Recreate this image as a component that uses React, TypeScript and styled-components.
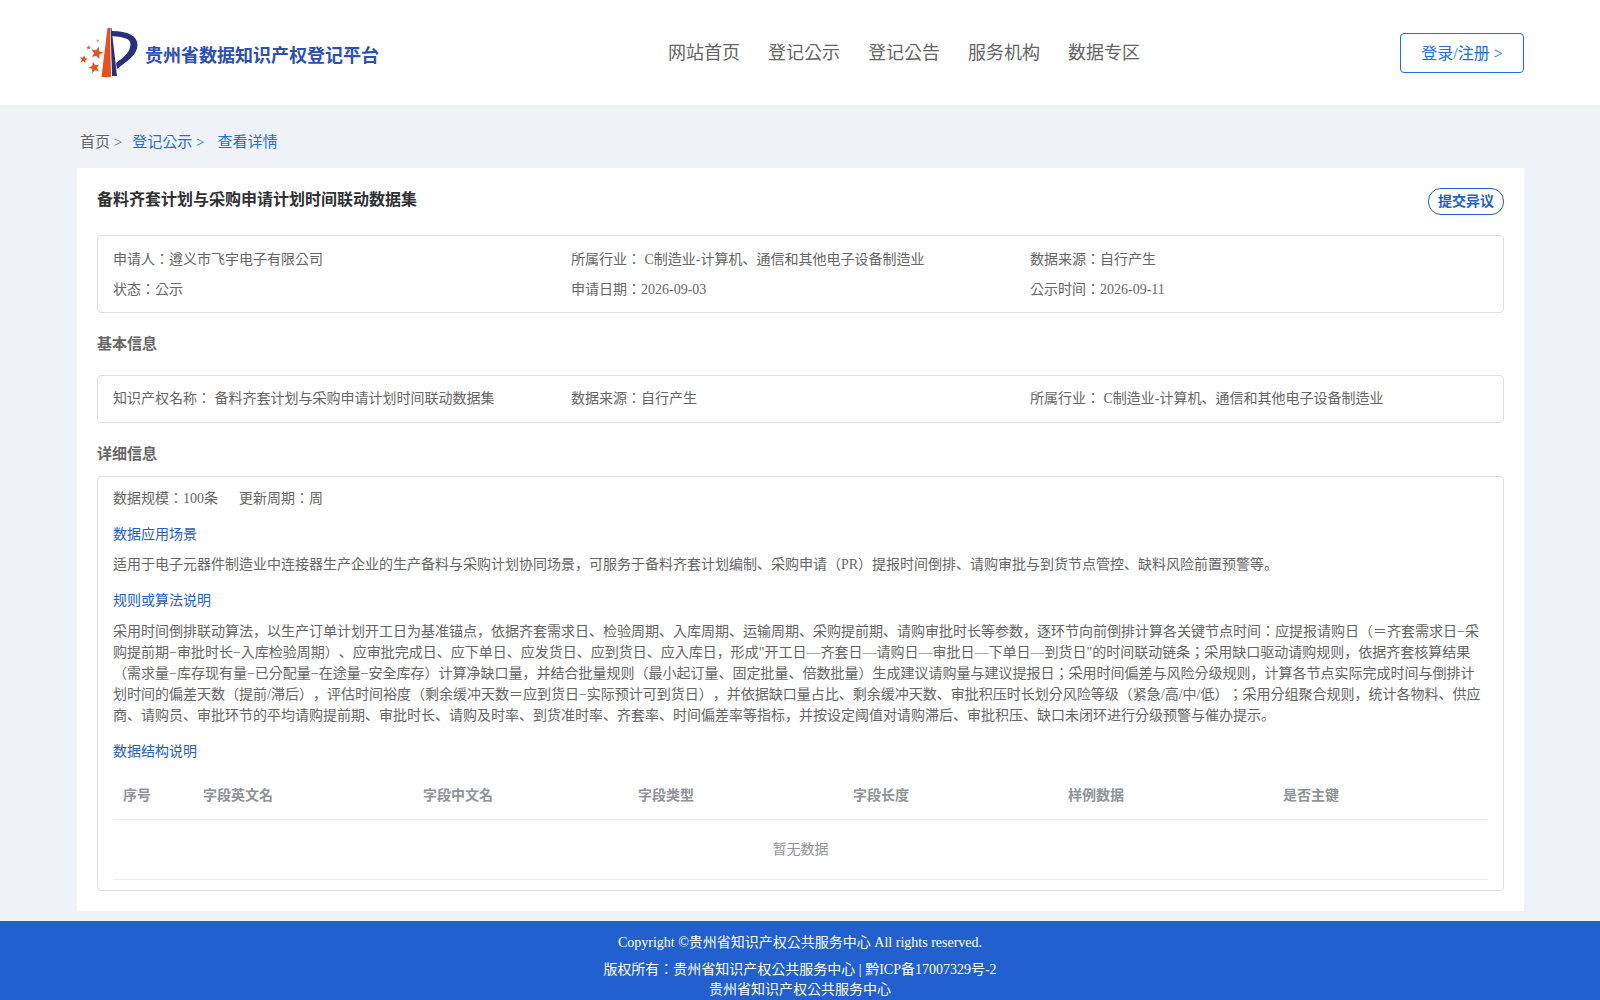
import { ReactElement } from 'react';
import styled, { createGlobalStyle } from 'styled-components';

const GlobalStyle = createGlobalStyle`
  html, body {
    margin: 0;
    padding: 0;
    background: #eff2f6;
    font-family: "Liberation Serif", "Noto Sans CJK KR", serif;
    color: #666;
    text-spacing-trim: space-all;
  }

  * {
    box-sizing: border-box;
  }
`;

const Header = styled.header`
  display: flex;
  align-items: center;
  justify-content: space-between;

  height: 105px;
  padding: 0 76px 0 80px;

  background: #fff;
`;

const Brand = styled.div`
  display: flex;
  align-items: center;

  width: 400px;
  padding-top: 1px;
`;

const BrandName = styled.span`
  margin: 6px 0 0 7px;

  font-size: 18px;
  font-weight: 700;
  line-height: 24px;
  color: #2b4fb5;
`;

const Nav = styled.nav`
  display: flex;
  gap: 28px;

  margin-left: 188px;
  padding-bottom: 3px;
`;

const NavItem = styled.a`
  font-size: 18px;
  color: #666;
`;

const LoginButton = styled.button`
  width: 124px;
  height: 40px;
  margin-left: auto;
  padding: 3px 0 0;

  background: #fff;
  border: 1px solid #1a6fe8;
  border-radius: 4px;

  font-family: inherit;
  font-size: 16px;
  line-height: 20px;
  color: #1a6fe8;
`;

const Breadcrumb = styled.div`
  display: flex;
  align-items: center;

  height: 63px;
  padding: 10px 0 0 80px;

  font-size: 15px;
  line-height: 20px;
`;

const Crumb = styled.span<{ $active?: boolean; $gap: number }>`
  margin-right: ${(p) => p.$gap}px;
  color: ${(p) => (p.$active ? '#1a6fe8' : '#666')};
`;

const Card = styled.main`
  margin: 0 76px 10px 77px;
  padding: 20px;

  background: #fff;
`;

const TitleRow = styled.div`
  display: flex;
  align-items: flex-start;
  justify-content: space-between;

  height: 47px;
`;

const Title = styled.h1`
  margin: 0;

  font-size: 16px;
  font-weight: 700;
  line-height: 24px;
  color: #303133;
`;

const Objection = styled.button`
  height: 27px;
  padding: 0 9px;

  background: #fff;
  border: 1px solid #2260cf;
  border-radius: 13px;

  font-family: inherit;
  font-size: 14px;
  font-weight: 700;
  line-height: 20px;
  color: #2260cf;
`;

const Panel = styled.section`
  padding: 9px 15px;

  border: 1px solid #e0e0e0;
  border-radius: 4px;

  font-size: 14px;
  line-height: 21px;
`;

const DetailPanel = styled(Panel)`
  padding: 11px 15px 10px;
`;

const InfoGrid = styled.div`
  display: grid;
  grid-template-columns: 458px 459px 1fr;
  row-gap: 9px;
  padding: 3px 0 4px;
`;

const ApplicantGrid = styled(InfoGrid)`
  padding: 4px 0 3px;
`;

const SectionTitle = styled.h2`
  margin: 0;
  padding: 19px 0;

  font-size: 15px;
  font-weight: 700;
  line-height: 24px;
  color: #666;
`;

const DetailTitle = styled(SectionTitle)`
  padding: 19px 0 10px;
`;

const Meta = styled.div`
  display: flex;
  gap: 21px;
`;

const SubTitle = styled.div`
  margin-top: 15px;

  color: #2260cf;
`;

const Paragraph = styled.p<{ $gap: number }>`
  margin: ${(p) => p.$gap}px 0 0;
`;

const FieldTable = styled.table`
  width: 100%;
  margin-top: 10px;

  border-collapse: collapse;
  table-layout: fixed;
`;

const Head = styled.th`
  height: 47px;
  padding: 1px 10px 0;

  border-bottom: 1px solid #ebeef5;

  font-size: 14px;
  font-weight: 700;
  text-align: left;
  color: #909399;
`;

const Empty = styled.td`
  height: 60px;

  border-bottom: 1px solid #ebeef5;

  text-align: center;
  color: #909399;
`;

const Footer = styled.footer`
  height: 79px;
  padding-top: 11px;

  background: #2260cf;

  font-size: 14px;
  line-height: 21px;
  text-align: center;
  color: #fff;
`;

const FooterLine = styled.div<{ $gap?: number }>`
  margin-top: ${(p) => p.$gap ?? 0}px;
`;

function starPoints(cx: number, cy: number, r: number, tilt: number): string {
  const pts: string[] = [];
  for (let i = 0; i < 10; i += 1) {
    const radius = i % 2 === 0 ? r : r * 0.45;
    const angle = ((-90 + tilt + i * 36) * Math.PI) / 180;
    pts.push(`${(cx + radius * Math.cos(angle)).toFixed(2)},${(cy + radius * Math.sin(angle)).toFixed(2)}`);
  }
  return pts.join(' ');
}

function Logo(): ReactElement {
  return (
    <svg width="58" height="50" viewBox="0 0 58 50">
      <path d="M27.5 0 L30 0 L31 49 L21.5 49 Z" fill="#e8501c" />
      <path d="M30.5 0 L31.5 0 L37 48 L32 48 Z" fill="#27307f" />
      <path
        d="M32 3 C48 3 57.5 8 57.5 17 C57.5 27 47 33 37 41 L36 35 C44 29 50.5 24 50.5 16 C50.5 10 42 9 32 8 Z"
        fill="#27307f"
      />
      <polygon points={starPoints(17, 25, 6.5, 15)} fill="#e8501c" />
      <polygon points={starPoints(14.3, 39.7, 5.8, -15)} fill="#e8501c" />
      <polygon points={starPoints(3.7, 31.3, 4.2, 10)} fill="#e8501c" />
      <polygon points={starPoints(8.7, 19.7, 2.6, 0)} fill="#e8703c" />
      <circle cx="17.7" cy="12.7" r="1.2" fill="#ee9a70" />
    </svg>
  );
}

const columns = ['序号', '字段英文名', '字段中文名', '字段类型', '字段长度', '样例数据', '是否主键'];

export default function App(): ReactElement {
  return (
    <>
      <GlobalStyle />
      <Header>
        <Brand>
          <Logo />
          <BrandName>贵州省数据知识产权登记平台</BrandName>
        </Brand>
        <Nav>
          <NavItem>网站首页</NavItem>
          <NavItem>登记公示</NavItem>
          <NavItem>登记公告</NavItem>
          <NavItem>服务机构</NavItem>
          <NavItem>数据专区</NavItem>
        </Nav>
        <LoginButton>登录/注册 &gt;</LoginButton>
      </Header>

      <Breadcrumb>
        <Crumb $gap={10}>首页 &gt;</Crumb>
        <Crumb $active $gap={13}>登记公示 &gt;</Crumb>
        <Crumb $active $gap={0}>查看详情</Crumb>
      </Breadcrumb>

      <Card>
        <TitleRow>
          <Title>备料齐套计划与采购申请计划时间联动数据集</Title>
          <Objection>提交异议</Objection>
        </TitleRow>

        <Panel>
          <ApplicantGrid>
            <div>申请人：遵义市飞宇电子有限公司</div>
            <div>所属行业： C制造业-计算机、通信和其他电子设备制造业</div>
            <div>数据来源：自行产生</div>
            <div>状态：公示</div>
            <div>申请日期：2026-09-03</div>
            <div>公示时间：2026-09-11</div>
          </ApplicantGrid>
        </Panel>

        <SectionTitle>基本信息</SectionTitle>

        <Panel>
          <InfoGrid>
            <div>知识产权名称： 备料齐套计划与采购申请计划时间联动数据集</div>
            <div>数据来源：自行产生</div>
            <div>所属行业： C制造业-计算机、通信和其他电子设备制造业</div>
          </InfoGrid>
        </Panel>

        <DetailTitle>详细信息</DetailTitle>

        <DetailPanel>
          <Meta>
            <span>数据规模：100条</span>
            <span>更新周期：周</span>
          </Meta>
          <SubTitle>数据应用场景</SubTitle>
          <Paragraph $gap={9}>
            适用于电子元器件制造业中连接器生产企业的生产备料与采购计划协同场景，可服务于备料齐套计划编制、采购申请（PR）提报时间倒排、请购审批与到货节点管控、缺料风险前置预警等。
          </Paragraph>
          <SubTitle>规则或算法说明</SubTitle>
          <Paragraph $gap={10}>
            采用时间倒排联动算法，以生产订单计划开工日为基准锚点，依据齐套需求日、检验周期、入库周期、运输周期、采购提前期、请购审批时长等参数，逐环节向前倒排计算各关键节点时间：应提报请购日（＝齐套需求日−采购提前期−审批时长−入库检验周期）、应审批完成日、应下单日、应发货日、应到货日、应入库日，形成"开工日—齐套日—请购日—审批日—下单日—到货日"的时间联动链条；采用缺口驱动请购规则，依据齐套核算结果（需求量−库存现有量−已分配量−在途量−安全库存）计算净缺口量，并结合批量规则（最小起订量、固定批量、倍数批量）生成建议请购量与建议提报日；采用时间偏差与风险分级规则，计算各节点实际完成时间与倒排计划时间的偏差天数（提前/滞后），评估时间裕度（剩余缓冲天数＝应到货日−实际预计可到货日），并依据缺口量占比、剩余缓冲天数、审批积压时长划分风险等级（紧急/高/中/低）；采用分组聚合规则，统计各物料、供应商、请购员、审批环节的平均请购提前期、审批时长、请购及时率、到货准时率、齐套率、时间偏差率等指标，并按设定阈值对请购滞后、审批积压、缺口未闭环进行分级预警与催办提示。
          </Paragraph>
          <SubTitle>数据结构说明</SubTitle>
          <FieldTable>
            <colgroup>
              <col width="80" />
              <col width="220" />
            </colgroup>
            <thead>
              <tr>
                {columns.map((name) => (
                  <Head key={name}>{name}</Head>
                ))}
              </tr>
            </thead>
            <tbody>
              <tr>
                <Empty colSpan={7}>暂无数据</Empty>
              </tr>
            </tbody>
          </FieldTable>
        </DetailPanel>
      </Card>

      <Footer>
        <FooterLine>Copyright ©贵州省知识产权公共服务中心 All rights reserved.</FooterLine>
        <FooterLine $gap={6}>版权所有：贵州省知识产权公共服务中心 | 黔ICP备17007329号-2</FooterLine>
        <FooterLine $gap={-1}>贵州省知识产权公共服务中心</FooterLine>
      </Footer>
    </>
  );
}
